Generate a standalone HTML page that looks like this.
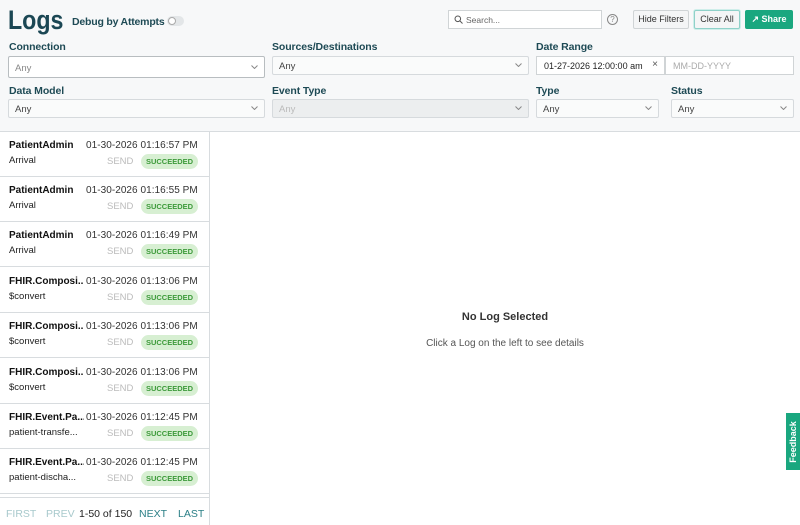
<!DOCTYPE html>
<html><head><style>
*{box-sizing:border-box;margin:0;padding:0}
body{width:800px;height:525px;overflow:hidden;background:#f7f8f9;font-family:"Liberation Sans",sans-serif;position:relative;color:#1f2d33}
.abs{position:absolute}
.lbl{position:absolute;font-size:10.5px;font-weight:bold;color:#1e4a55;letter-spacing:-0.1px}
.sel{position:absolute;height:19px;border:1px solid #d6dadd;background:#fafbfb;font-size:9.5px;color:#444;padding:4px 6px;border-radius:2px}
.sel svg{position:absolute;right:6px;top:6px}
.row{position:absolute;left:0;width:209px;height:45px;border-bottom:1px solid #d8dcdf;background:#fff}
.row .n{position:absolute;left:9px;top:8px;font-size:10px;font-weight:bold;color:#111;width:75px;white-space:nowrap;overflow:hidden}
.row .t{position:absolute;left:86px;top:8px;font-size:10px;color:#333;letter-spacing:0.05px}
.row .s{position:absolute;left:9px;top:23px;font-size:9.5px;color:#222}
.row .sd{position:absolute;left:107px;top:24px;font-size:9.5px;color:#bbb}
.row .b{position:absolute;left:141px;top:22px;width:57px;height:15px;border-radius:8px;background:#d7efd2;color:#3d9a3a;font-size:7.5px;font-weight:bold;text-align:center;line-height:15px}
.btn{position:absolute;top:10px;height:19px;font-size:9px;border:1px solid #d0d4d6;background:#f4f5f6;color:#333;text-align:center;line-height:17px;border-radius:2px}
</style></head><body>
<div class="abs" style="left:8px;top:5px;font-size:27px;font-weight:bold;color:#1b4754;transform:scaleX(0.86);transform-origin:left">Logs</div>
<div class="abs" style="left:72px;top:16px;font-size:10.5px;font-weight:bold;color:#1e4a55;letter-spacing:-0.2px">Debug by Attempts</div>
<div class="abs" style="left:167px;top:16px;width:17px;height:10px;border-radius:5px;background:#e3e6e8"><div style="width:8px;height:8px;border-radius:50%;border:1px solid #aaa;background:#fff;margin:1px"></div></div>
<div class="abs" style="left:448px;top:10px;width:154px;height:19px;border:1px solid #d0d4d6;background:#fff;font-size:8.5px;color:#666;padding:4px 0 0 17px">Search...<svg class="abs" style="left:5px;top:4px" width="9" height="9" viewBox="0 0 9 9"><circle cx="3.8" cy="3.8" r="2.8" fill="none" stroke="#555" stroke-width="1"/><path d="M6 6L8.5 8.5" stroke="#555" stroke-width="1"/></svg></div>
<div class="abs" style="left:607px;top:14px;width:11px;height:11px;border:1px solid #888;border-radius:50%;font-size:8px;text-align:center;line-height:9px;color:#888">?</div>
<div class="btn" style="left:633px;width:56px">Hide Filters</div>
<div class="btn" style="left:694px;width:46px;border:1px solid #8fd1c9;box-shadow:0 0 0 1px #cfeeea">Clear All</div>
<div class="btn" style="left:745px;width:48px;background:#1aa77f;border-color:#1aa77f;color:#fff;font-weight:bold">&#8599; Share</div>

<div class="lbl" style="left:9px;top:41px">Connection</div>
<div class="sel" style="left:8px;top:56px;width:257px;height:22px;background:#fff;border-color:#b8bdc0;color:#888;padding-top:6px">Any<svg style="top:8px" width="7" height="4" viewBox="0 0 7 4"><path d="M.5 .5L3.5 3.5L6.5 .5" fill="none" stroke="#888"/></svg></div>
<div class="lbl" style="left:272px;top:41px">Sources/Destinations</div>
<div class="sel" style="left:272px;top:56px;width:257px">Any<svg width="7" height="4" viewBox="0 0 7 4"><path d="M.5 .5L3.5 3.5L6.5 .5" fill="none" stroke="#888"/></svg></div>
<div class="lbl" style="left:536px;top:41px">Date Range</div>
<div class="abs" style="left:536px;top:56px;width:129px;height:19px;border:1px solid #d0d4d6;background:#fff;font-size:9px;color:#222;padding:4px 7px">01-27-2026 12:00:00 am<span style="position:absolute;right:6px;top:2px;color:#555;font-size:10px">×</span></div>
<div class="abs" style="left:665px;top:56px;width:129px;height:19px;border:1px solid #d0d4d6;background:#fff;font-size:9px;color:#aaa;padding:4px 7px">MM-DD-YYYY</div>

<div class="lbl" style="left:9px;top:85px">Data Model</div>
<div class="sel" style="left:8px;top:99px;width:257px">Any<svg width="7" height="4" viewBox="0 0 7 4"><path d="M.5 .5L3.5 3.5L6.5 .5" fill="none" stroke="#888"/></svg></div>
<div class="lbl" style="left:272px;top:85px">Event Type</div>
<div class="sel" style="left:272px;top:99px;width:257px;background:#eceeef;color:#bbb">Any<svg width="7" height="4" viewBox="0 0 7 4"><path d="M.5 .5L3.5 3.5L6.5 .5" fill="none" stroke="#888"/></svg></div>
<div class="lbl" style="left:536px;top:85px">Type</div>
<div class="sel" style="left:536px;top:99px;width:123px">Any<svg width="7" height="4" viewBox="0 0 7 4"><path d="M.5 .5L3.5 3.5L6.5 .5" fill="none" stroke="#888"/></svg></div>
<div class="lbl" style="left:671px;top:85px">Status</div>
<div class="sel" style="left:671px;top:99px;width:123px">Any<svg width="7" height="4" viewBox="0 0 7 4"><path d="M.5 .5L3.5 3.5L6.5 .5" fill="none" stroke="#888"/></svg></div>

<div class="abs" style="left:0;top:131px;width:800px;height:394px;background:#fff;border-top:1px solid #d8dcdf"></div>
<div class="abs" style="left:209px;top:131px;width:1px;height:394px;background:#d8dcdf"></div>

<div class="row" style="top:132px"><div class="n">PatientAdmin</div><div class="t">01-30-2026 01:16:57 PM</div><div class="s">Arrival</div><div class="sd">SEND</div><div class="b">SUCCEEDED</div></div>
<div class="row" style="top:177px"><div class="n">PatientAdmin</div><div class="t">01-30-2026 01:16:55 PM</div><div class="s">Arrival</div><div class="sd">SEND</div><div class="b">SUCCEEDED</div></div>
<div class="row" style="top:222px"><div class="n">PatientAdmin</div><div class="t">01-30-2026 01:16:49 PM</div><div class="s">Arrival</div><div class="sd">SEND</div><div class="b">SUCCEEDED</div></div>
<div class="row" style="top:268px"><div class="n">FHIR.Composi...</div><div class="t">01-30-2026 01:13:06 PM</div><div class="s">$convert</div><div class="sd">SEND</div><div class="b">SUCCEEDED</div></div>
<div class="row" style="top:313px"><div class="n">FHIR.Composi...</div><div class="t">01-30-2026 01:13:06 PM</div><div class="s">$convert</div><div class="sd">SEND</div><div class="b">SUCCEEDED</div></div>
<div class="row" style="top:359px"><div class="n">FHIR.Composi...</div><div class="t">01-30-2026 01:13:06 PM</div><div class="s">$convert</div><div class="sd">SEND</div><div class="b">SUCCEEDED</div></div>
<div class="row" style="top:404px"><div class="n">FHIR.Event.Pa...</div><div class="t">01-30-2026 01:12:45 PM</div><div class="s">patient-transfe...</div><div class="sd">SEND</div><div class="b">SUCCEEDED</div></div>
<div class="row" style="top:449px"><div class="n">FHIR.Event.Pa...</div><div class="t">01-30-2026 01:12:45 PM</div><div class="s">patient-discha...</div><div class="sd">SEND</div><div class="b">SUCCEEDED</div></div>
<div class="abs" style="left:0;top:497px;width:209px;height:1px;background:#d8dcdf"></div>
<div class="abs" style="left:6px;top:508px;font-size:10.5px;color:#a8c9cc">FIRST</div>
<div class="abs" style="left:46px;top:508px;font-size:10.5px;color:#a8c9cc">PREV</div>
<div class="abs" style="left:79px;top:508px;font-size:10.5px;color:#222">1-50 of 150</div>
<div class="abs" style="left:139px;top:508px;font-size:10.5px;color:#2b7f86">NEXT</div>
<div class="abs" style="left:178px;top:508px;font-size:10.5px;color:#2b7f86">LAST</div>

<div class="abs" style="left:210px;top:311px;width:590px;text-align:center;font-size:11px;font-weight:bold;color:#333">No Log Selected</div>
<div class="abs" style="left:210px;top:338px;width:590px;text-align:center;font-size:10px;color:#555">Click a Log on the left to see details</div>
<div class="abs" style="left:786px;top:413px;width:14px;height:57px;background:#1aa77f"></div>
<div class="abs" style="left:770px;top:435px;width:46px;height:14px;transform:rotate(-90deg);color:#fff;font-size:9px;font-weight:bold;text-align:center;line-height:14px">Feedback</div>
</body></html>
